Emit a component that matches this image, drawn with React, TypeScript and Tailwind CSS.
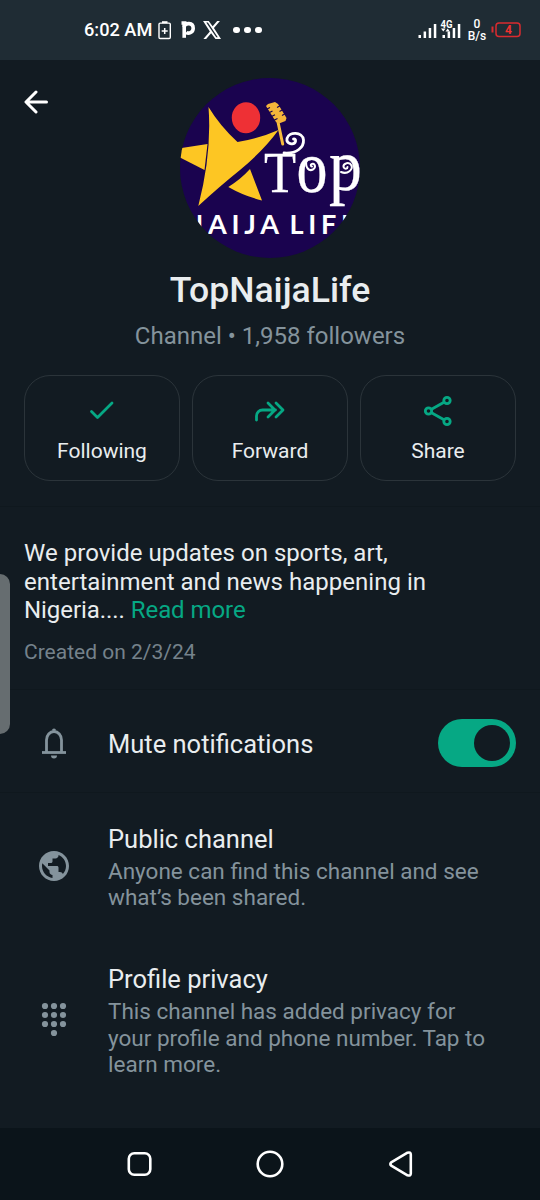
import type { ReactNode } from 'react';

interface ActionButtonProps {
  label: string;
  children: ReactNode;
}

interface InfoRowProps {
  title: string;
  lines: string[];
  icon: ReactNode;
}

function StatusBar() {
  return (
    <div className="flex h-[60px] items-center justify-between bg-[#1f2c34] pl-[84px] pr-[18px] text-white">
      <div className="flex items-center">
        <span className="w-[74px] whitespace-nowrap pt-[1px] text-[18.2px] font-medium leading-none">6:02 AM</span>
        <svg className="h-[20px] w-[14px]" viewBox="0 0 14 20" fill="none">
          <path d="M4 1.200h5.500v2H4z" fill="white" />
          <rect x="1" y="3.1" width="11.300" height="15.4" rx="1.2" stroke="white" strokeWidth="1.4" />
          <path d="M6.700 8v6M3.700 11h6" stroke="white" strokeWidth="1.5" />
        </svg>
        <svg className="ml-[9px] h-[20px] w-[16px]" viewBox="0 0 16 20" fill="none">
          <path d="M3.2 17.800V3" stroke="white" strokeWidth="3.600" />
          <path d="M.5 3h5M3 7c1-4.800 9.200-4.600 9.200 1.300c0 4.800-5 5.600-7 4" stroke="white" strokeWidth="3.600" />
        </svg>
        <svg className="ml-[5px] h-[20px] w-[20px]" viewBox="0 0 24 24" fill="white">
          <path d="M18.244 1.25h3.308l-7.227 8.26L22.827 22.750H16.170l-5.214-6.817L4.990 22.750H1.680l7.730-8.835L1.254 1.250H8.080l4.713 6.231zm-1.161 19.520h1.833L7.084 3.126H5.117z" />
        </svg>
        <div className="ml-[11px] flex gap-[4.5px]">
          <span className="size-[6.5px] rounded-full bg-white" />
          <span className="size-[6.5px] rounded-full bg-white" />
          <span className="size-[6.5px] rounded-full bg-white" />
        </div>
      </div>
      <div className="flex items-center">
        <svg className="h-[22px] w-[44px]" viewBox="0 0 44 22" fill="white">
          <path d="M.5 16h2.500v3H.5zM5.600 12.500h2.500V19H5.600zM10.700 9h2.500v10h-2.500zM15.800 5h2.500v14h-2.500z" />
          <path d="M24.500 16h2.500v3h-2.500zM29.600 12.500h2.500V19h-2.500zM34.700 9h2.500v10h-2.500zM39.800 5h2.500v14h-2.500z" />
          <path d="M23 9.500h4.500l-2.200 3zM27.500 12.500l2.200-3 2.200 3z" />
          <text x="22.500" y="8.500" fontSize="11" fontWeight="700" fontFamily="Roboto, sans-serif" textLength="12" lengthAdjust="spacingAndGlyphs">4G</text>
        </svg>
        <div className="ml-[5px] w-[20px] text-center text-[12px] font-medium leading-[12px]">
          <div>0</div>
          <div>B/s</div>
        </div>
        <svg className="ml-[4px] h-[18px] w-[31px]" viewBox="0 0 31 18" fill="none">
          <rect x="5" y="2" width="24" height="13.500" rx="3" stroke="#d92b2f" strokeWidth="1.500" />
          <path d="M1.500 5.500v6" stroke="#d92b2f" strokeWidth="2" />
          <text x="17.500" y="13" textAnchor="middle" fontSize="12" fontWeight="700" fontFamily="Roboto, sans-serif" fill="#f0302f">4</text>
        </svg>
      </div>
    </div>
  );
}

function ChannelAvatar() {
  return (
    <svg className="size-[180px] rounded-full" viewBox="0 0 180 180">
      <rect width="180" height="180" fill="#1a034f" />
      <g fill="#fdc623">
        <path d="M28.500 29Q40 48 57.500 64Q78 61 98.500 52Q84 72 60 92Q40 108 18.300 128Q32 75 28.500 29Z" />
        <path d="M-2 70.500L27.500 66L24.500 92L-2 78.500Z" />
        <path d="M48.300 109Q61 101 70 91L82 122.500Q64 118 48.300 109Z" />
      </g>
      <ellipse cx="66" cy="39.700" rx="14.200" ry="15.500" fill="#ee3035" />
      <path d="M98 44L102.700 66" stroke="#f7bd3c" strokeWidth="3" strokeLinecap="round" />
      <path d="M86 28L88 26L95 24L98 26L106.500 40L105.500 43L99 45.500L96 44Z" fill="#f5b53a" />
      <path d="M86 31.500l4-2M88.500 35l4-2M91 38.700l4-2M93.500 42.500l4-2M97 29.500l3.500-2M99.500 33.500l3.500-2M102 37.500l3.500-2" stroke="#1a034f" strokeWidth="1.200" />
      <g fill="white" stroke="white" strokeWidth=".3" fontFamily="Liberation Serif, serif">
        <text x="84" y="113.500" fontSize="58" textLength="32" lengthAdjust="spacingAndGlyphs">T</text>
        <text x="116.500" y="114" fontSize="73" textLength="31" lengthAdjust="spacingAndGlyphs">o</text>
        <text x="149" y="112" fontSize="73" textLength="33" lengthAdjust="spacingAndGlyphs">p</text>
      </g>
      <g fill="none" stroke="white" strokeLinecap="round">
        <path d="M104 75C117 76 124 69 123.500 62C122.500 53.500 109 53.500 107 60.500C106 66 114 67.500 115.500 63.500C116 61.500 114.500 60.500 113.500 61" strokeWidth="2.800" />
        <path d="M126.500 82C125 90 129 93.500 133 91.500C137 88.500 134 84 131 86.500C130.500 87.500 131 88.500 132 88.500" strokeWidth="2" />
        <path d="M161 94C168 97 173 91 171.500 87.500C169.500 83.500 163 85 163.500 89C164.500 91.500 167.500 91 167.500 89" strokeWidth="2" />
      </g>
      <g fill="white" fontSize="27" fontWeight="700" fontFamily="Lato, sans-serif">
        <text x="2.500" y="155.500" textLength="96.500" lengthAdjust="spacing">NAIJA</text>
        <text x="109.500" y="155.500" textLength="67" lengthAdjust="spacing">LIFE</text>
      </g>
    </svg>
  );
}

function ActionButton({ label, children }: ActionButtonProps) {
  return (
    <button className="flex h-[106px] flex-1 flex-col items-center rounded-[26px] border border-[#2b343a] pt-[17px]">
      {children}
      <span className="mt-[9px] text-[21px] leading-[26px] text-[#e9edef]">{label}</span>
    </button>
  );
}

function InfoRow({ title, lines, icon }: InfoRowProps) {
  return (
    <div className="flex items-center">
      <div className="-mt-px flex w-[108px] justify-center">{icon}</div>
      <div>
        <h2 className="text-[25.5px] leading-[32px] text-[#e9edef]">{title}</h2>
        <p className="mt-[3px] text-[22.500px] leading-[26.200px] text-[#84939c]">
          {lines.map((line) => (
            <span key={line} className="block whitespace-nowrap">{line}</span>
          ))}
        </p>
      </div>
    </div>
  );
}

// Phone dial pad: three full rows and a single dot below
function DialpadIcon() {
  return (
    <svg className="h-[36px] w-[26px]" viewBox="0 0 26 36" fill="#84939c">
      {[4, 13, 22].map((y) =>
        [4, 13, 22].map((x) => <circle key={`${x}-${y}`} cx={x} cy={y} r="3.1" />)
      )}
      <circle cx="13" cy="31" r="3.1" />
    </svg>
  );
}

export default function App() {
  return (
    <div className="relative flex h-[1200px] w-[540px] flex-col overflow-hidden bg-[#121b22] font-['Roboto',sans-serif]">
      <StatusBar />

      {/* Channel header */}
      <header className="relative flex h-[447px] flex-col items-center border-b border-[#0f181e] pt-[18px]">
        <button className="absolute left-[24px] top-[30px]" aria-label="Back">
          <svg className="size-[24px]" viewBox="0 0 24 24" fill="none" stroke="white" strokeWidth="3" strokeLinecap="round" strokeLinejoin="round">
            <path d="M22.500 12H2.500M12 2L2 12l10 10" />
          </svg>
        </button>
        <ChannelAvatar />
        <h1 className="mt-[11px] text-[35.600px] font-medium leading-[42px] text-[#e9edef]">TopNaijaLife</h1>
        <p className="mt-[10px] text-[24px] leading-[30px] text-[#84939c]">Channel • 1,958 followers</p>
        <div className="mt-[24px] flex w-full gap-[12px] px-[24px]">
          <ActionButton label="Following">
            <svg className="size-[36px]" viewBox="0 0 36 36" fill="none" stroke="#06a884" strokeWidth="2.800" strokeLinecap="round" strokeLinejoin="round">
              <path d="M7.500 18.500l6 6L28 10" />
            </svg>
          </ActionButton>
          <ActionButton label="Forward">
            <svg className="size-[36px]" viewBox="0 0 36 36" fill="none" stroke="#06a884" strokeWidth="2.800" strokeLinecap="round" strokeLinejoin="round">
              <path d="M4.500 27v-4a6 6 0 0 1 6-6h13M16 10l7 7-7 7M24 10l7 7-7 7" />
            </svg>
          </ActionButton>
          <ActionButton label="Share">
            <svg className="size-[36px]" viewBox="0 0 36 36" fill="none" stroke="#06a884" strokeWidth="2.800">
              <circle cx="8.500" cy="18" r="3.200" />
              <circle cx="27" cy="7.500" r="3.200" />
              <circle cx="27" cy="28.500" r="3.200" />
              <path d="M11.500 16.300l12.500-7M11.500 19.700l12.500 7" />
            </svg>
          </ActionButton>
        </div>
      </header>

      {/* Description */}
      <section className="h-[183px] border-b border-[#0f181e] pl-[24px] pt-[32px]">
        <p className="text-[24px] leading-[28.500px] text-[#e9edef]">
          <span className="block tracking-[0.03px]">We provide updates on sports, art,</span>
          <span className="block tracking-[0.03px]">entertainment and news happening in</span>
          <span className="block tracking-[-0.06px]">Nigeria.... <span className="text-[#06a884]">Read more</span></span>
        </p>
        <p className="mt-[14px] text-[21px] leading-[26px] text-[#75828b]">Created on 2/3/24</p>
      </section>

      {/* Mute toggle */}
      <section className="flex h-[103px] items-center border-b border-[#0f181e] pr-[24px] pt-[3px]">
        <div className="flex w-[108px] justify-center">
          <svg className="h-[32px] w-[26px]" viewBox="0 0 26 32" fill="none" stroke="#84939c" strokeWidth="2.800">
            <path d="M5.500 25V13a7.500 8.500 0 0 1 15 0v12" />
            <path d="M1 25.500h24" />
            <path d="M10 28.500h6a3 3 0 0 1-6 0zM11 3.500a2 2 0 0 1 4 0z" fill="#84939c" stroke="none" />
          </svg>
        </div>
        <span className="flex-1 pt-[3px] text-[25.500px] text-[#e9edef]">Mute notifications</span>
        <button className="flex h-[48px] w-[78px] items-center justify-end rounded-full bg-[#06a884] pr-[6px]" role="switch" aria-checked="true" aria-label="Mute notifications">
          <span className="size-[36px] rounded-full bg-[#121b22]" />
        </button>
      </section>

      {/* Privacy details */}
      <section className="flex flex-1 flex-col gap-[53px] pt-[30px]">
        <InfoRow
          title="Public channel"
          lines={['Anyone can find this channel and see', 'what’s been shared.']}
          icon={
            <svg className="size-[36px]" viewBox="0 0 24 24" fill="#84939c">
              <path d="M12 2C6.480 2 2 6.480 2 12s4.480 10 10 10 10-4.480 10-10S17.520 2 12 2zm-1 17.930c-3.950-.490-7-3.850-7-7.930 0-.620.080-1.210.210-1.790L9 15v1c0 1.100.900 2 2 2v1.930zm6.900-2.540c-.260-.810-1-1.390-1.900-1.390h-1v-3c0-.550-.450-1-1-1H8v-2h2c.550 0 1-.450 1-1V7h2c1.100 0 2-.900 2-2v-.410c2.930 1.190 5 4.060 5 7.410 0 2.080-.800 3.970-2.100 5.390z" />
            </svg>
          }
        />
        <InfoRow
          title="Profile privacy"
          lines={['This channel has added privacy for', 'your profile and phone number. Tap to', 'learn more.']}
          icon={<DialpadIcon />}
        />
      </section>

      {/* System navigation */}
      <nav className="flex h-[72px] items-center justify-between bg-[#0b141a] px-[126px]">
        <svg className="size-[28px]" viewBox="0 0 28 28" fill="none" stroke="white" strokeWidth="2.600">
          <rect x="2.800" y="3.300" width="21.500" height="21.500" rx="5.500" />
        </svg>
        <svg className="size-[28px]" viewBox="0 0 28 28" fill="none" stroke="white" strokeWidth="2.600">
          <circle cx="14" cy="14" r="12.300" />
        </svg>
        <svg className="size-[28px]" viewBox="0 0 28 28" fill="none" stroke="white" strokeWidth="2.600" strokeLinejoin="round">
          <path d="M5.200 12.300L21.500 2.700Q24.800 1.700 24.800 4.500V23.500Q24.800 26.300 21.500 25.300L5.200 15.700Q3.600 14 5.200 12.300Z" />
        </svg>
      </nav>

      {/* Edge panel handle */}
      <div className="absolute left-0 top-[574px] h-[160px] w-[10px] rounded-r-[10px] bg-[#666d70]" />
    </div>
  );
}
